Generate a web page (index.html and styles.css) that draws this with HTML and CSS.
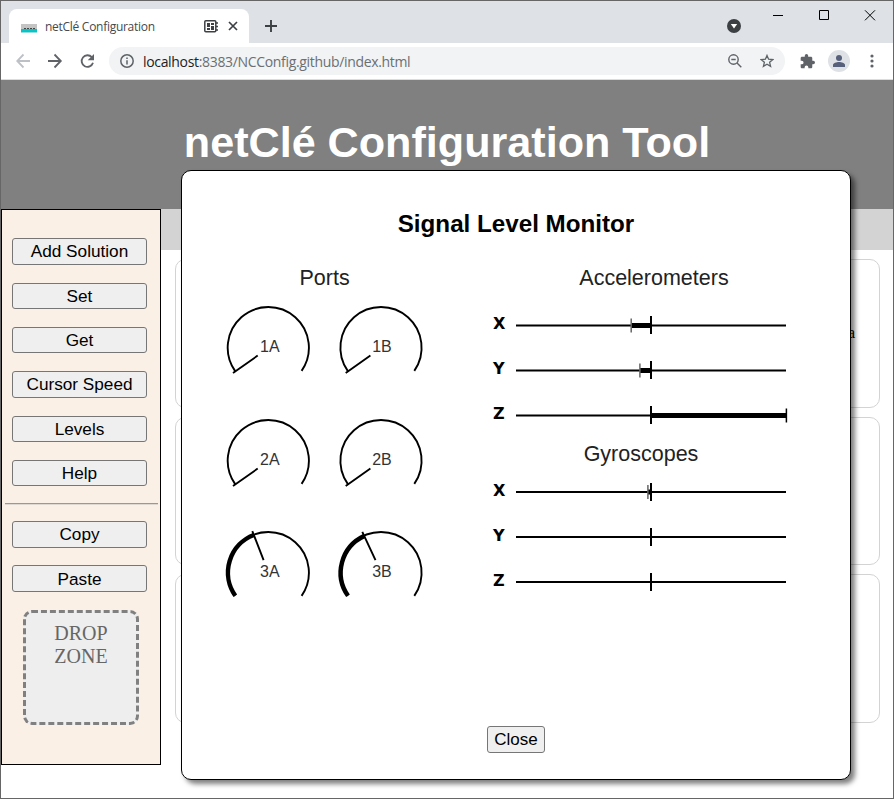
FILE: index.html
```html
<!DOCTYPE html>
<html lang="en">
<head>
<meta charset="utf-8">
<title>netClé Configuration</title>
<link rel="stylesheet" href="styles.css">
</head>
<body>
<div class="window">
  <div class="tabstrip">
    <div class="tab">
      <svg class="favicon" width="16" height="9" viewBox="0 0 16 9"><path fill="#c4c4c4" d="M0 0h16v5H0z"/><path fill="#00c8c8" d="M0 5h16v4H0z"/><path fill="#98dede" d="M0 8h16v1H0z"/><path stroke="#444" stroke-dasharray="2 1" d="M3 4.5h11"/></svg>
      <span class="tab-title">netClé Configuration</span>
      <svg class="chip" width="15" height="13" viewBox="0 0 15 13" fill="none" stroke="#3c4043"><rect x=".8" y=".8" width="11" height="11" rx="1" stroke-width="1.5"/><path stroke-width="1.5" d="M12 3h2M12 6.5h2M12 10h2"/><path fill="#3c4043" stroke="none" d="M3 3h3v4H3zM7 3h3v2H7zM3 8h3v2H3zM7 6h3v4H7z"/></svg>
      <svg class="tab-close" width="10" height="10" viewBox="0 0 10 10" stroke="#3c4043" stroke-width="1.7"><path d="M1 1l8 8M9 1l-8 8"/></svg>
    </div>
    <svg class="new-tab" width="12" height="12" viewBox="0 0 12 12" stroke="#3c4043" stroke-width="1.9"><path d="M6 0v12M0 6h12"/></svg>
    <svg class="tab-search" width="14" height="14" viewBox="0 0 14 14"><circle cx="7" cy="7" r="7" fill="#3c4043"/><path fill="#fff" d="M3.8 5h6.4L7 9.6z"/></svg>
    <svg class="win-controls" width="104" height="12" viewBox="0 0 104 12" fill="none" stroke="#000"><path d="M0 5.500h10M46.500.5h9v9h-9zM92 .3l10 10M102 .3l-10 10"/></svg>
  </div>
  <div class="toolbar">
    <svg class="nav" width="80" height="16" viewBox="0 0 80 16" fill="none" stroke-width="1.8"><g stroke="#bdc1c6"><path d="M14 8H1.500M7.500 1.500L1.200 8l6.300 6.500"/></g><g stroke="#5f6368"><path d="M32 8h12.500M38.500 1.500L44.800 8l-6.300 6.500M75.800 4.200A5.800 5.800 0 1 0 77 9.800"/><path fill="#5f6368" stroke="none" d="M78 1v6.300h-6.300z"/></g></svg>
    <div class="omnibox">
      <svg width="14" height="14" viewBox="0 0 14 14" fill="none" stroke="#5f6368" stroke-width="1.5"><circle cx="7" cy="7" r="6.200"/><path d="M7 6.200v4.300M7 3.400v1.500"/></svg>
      <span class="url"><b>localhost</b>:8383/NCConfig.github/index.html</span>
      <svg class="mag" width="14" height="14" viewBox="0 0 14 14" fill="none" stroke="#5f6368" stroke-width="1.400"><circle cx="5.500" cy="5.500" r="4.700"/><path d="M3.300 5.500h4.400M9 9l4.300 4.300"/></svg>
      <svg class="star" width="14" height="14" viewBox="0 0 14 14" fill="none" stroke="#5f6368" stroke-width="1.300"><path d="M7 1.400l1.600 3.800 4.200.4-3.200 2.700 1 4.100L7 10.200l-3.600 2.200 1-4.100L1.200 5.600l4.200-.4z"/></svg>
    </div>
    <svg class="puzzle" width="15" height="15" viewBox="1 1 22 22"><path fill="#5f6368" d="M20.500 11H19V7c0-1.100-.9-2-2-2h-4V3.500a2.500 2.500 0 0 0-5 0V5H4c-1.100 0-2 .9-2 2v3.800h1.500a2.700 2.700 0 0 1 0 5.400H2V20c0 1.100.9 2 2 2h3.800v-1.500a2.700 2.700 0 0 1 5.400 0V22H17c1.100 0 2-.9 2-2v-4h1.500a2.500 2.500 0 0 0 0-5z"/></svg>
    <svg class="avatar" width="22" height="22" viewBox="0 0 22 22"><circle cx="11" cy="11" r="11" fill="#dee1e6"/><g fill="#56607a"><circle cx="11" cy="8" r="3"/><path d="M5 17v-2c0-2 3.500-3 6-3s6 1 6 3v2z"/></g></svg>
    <svg class="dots" width="4" height="14" viewBox="0 0 4 14" fill="#5f6368"><circle cx="2" cy="2" r="1.600"/><circle cx="2" cy="7" r="1.600"/><circle cx="2" cy="12" r="1.600"/></svg>
  </div>
  <div class="page">
    <header class="banner"><h1>netClé Configuration Tool</h1></header>
    <div class="body">
      <nav class="sidebar">
        <button>Add Solution</button>
        <button>Set</button>
        <button>Get</button>
        <button>Cursor Speed</button>
        <button>Levels</button>
        <button>Help</button>
        <hr>
        <button>Copy</button>
        <button>Paste</button>
        <div class="dropzone">DROP<br>ZONE</div>
      </nav>
      <main class="content">
        <div class="strip"></div>
        <div class="cards">
          <div class="card">a</div>
          <div class="card"></div>
          <div class="card"></div>
        </div>
      </main>
    </div>
  </div>
  <section class="dialog">
    <h2>Signal Level Monitor</h2>
    <div class="monitor">
      <div class="ports">
        <h3>Ports</h3>
        <div class="gauges">
          <svg class="gauge" viewBox="-56.300 -56.600 112.600 112.600"><path d="M-33.300 23.300A40.600 40.600 0 1 1 33.300 23.300M-10.600 8L-35.300 25.400"/><text x="1.500" y="4.500">1A</text></svg>
          <svg class="gauge" viewBox="-56 -56.600 112.600 112.600"><path d="M-33.300 23.300A40.600 40.600 0 1 1 33.300 23.300M-10.600 8L-35.300 25.400"/><text x="1" y="4.500">1B</text></svg>
          <svg class="gauge" viewBox="-56.300 -56.600 112.600 112.600"><path d="M-33.300 23.300A40.600 40.600 0 1 1 33.300 23.300M-10.600 8L-35.300 25.400"/><text x="1.500" y="4.500">2A</text></svg>
          <svg class="gauge" viewBox="-56 -56.600 112.600 112.600"><path d="M-33.300 23.300A40.600 40.600 0 1 1 33.300 23.300M-10.600 8L-35.300 25.400"/><text x="1" y="4.500">2B</text></svg>
          <svg class="gauge" viewBox="-56.300 -56.600 112.600 112.600"><path d="M-33.300 23.300A40.600 40.600 0 1 1 33.300 23.300M-4.700 -12.500L-16 -41.500"/><path class="level" d="M-33 23.200A40.300 40.300 0 0 1 -14.500 -37.600"/><text x="1.500" y="4.500">3A</text></svg>
          <svg class="gauge" viewBox="-56 -56.600 112.600 112.600"><path d="M-33.300 23.300A40.600 40.600 0 1 1 33.300 23.300M-5.500 -12.500L-18.700 -40.800"/><path class="level" d="M-33 23.200A40.300 40.300 0 0 1 -17 -36.500"/><text x="1" y="4.500">3B</text></svg>
        </div>
      </div>
      <div class="sensors">
        <h3>Accelerometers</h3>
        <div class="axis"><b>X</b><svg width="272" height="20"><path class="line" d="M0 10.500h270"/><path class="mid" d="M135 1v18"/><path class="bar" d="M115.500 10.500H135"/><path class="peak" d="M115.200 3.500v14"/></svg></div>
        <div class="axis"><b>Y</b><svg width="272" height="20"><path class="line" d="M0 10.500h270"/><path class="mid" d="M135 1v18"/><path class="bar" d="M124 10.500h11"/><path class="peak" d="M123.900 3.500v14"/></svg></div>
        <div class="axis"><b>Z</b><svg width="272" height="20"><path class="line" d="M0 10.500h270"/><path class="mid" d="M135 1v18"/><path class="bar" d="M135 10.500h135"/><path class="peak full" d="M270.400 3.500v14"/></svg></div>
        <h3 class="gyro">Gyroscopes</h3>
        <div class="axis"><b>X</b><svg width="272" height="20"><path class="line" d="M0 10h270"/><path class="mid" d="M135 1v18"/><path class="bar" d="M132 10h3"/><path class="peak" d="M131.900 3v14"/></svg></div>
        <div class="axis"><b>Y</b><svg width="272" height="20"><path class="line" d="M0 10h270"/><path class="mid" d="M135 1v18"/></svg></div>
        <div class="axis"><b>Z</b><svg width="272" height="20"><path class="line" d="M0 10h270"/><path class="mid" d="M135 1v18"/></svg></div>
      </div>
    </div>
    <button class="close">Close</button>
  </section>
</div>
</body>
</html>
```
FILE: styles.css
```css
* { box-sizing: border-box; }
body { margin: 0; overflow: hidden; background: #fff; }
svg { display: block; flex: none; }
.window { position: relative; width: 894px; height: 799px; border: 1px solid #666; overflow: hidden; font-family: "Liberation Sans", Arial, sans-serif; }

.tabstrip { display: flex; height: 42px; background: #dee1e6; }
.tab { display: flex; align-items: center; width: 240px; height: 34px; margin: 8px 0 0 8px; padding-left: 12px; background: #fff; border-radius: 8px 8px 0 0; }
.favicon { margin-top: 4px; }
.tab-title { width: 159px; margin-left: 8px; font: 12px "Open Sans", sans-serif; letter-spacing: -.28px; color: #45494d; white-space: nowrap; }
.tab-close { margin-left: 9px; }
.new-tab { margin: 19px 0 0 16px; }
.tab-search { margin: 18px 0 0 auto; }
.win-controls { margin: 9px 16px 0 32px; }

.toolbar { display: flex; align-items: center; height: 37px; padding-left: 15px; background: #fff; border-bottom: 1px solid #dadce0; }
.omnibox { display: flex; align-items: center; width: 676px; height: 28px; margin-left: 13px; padding: 0 11px; border-radius: 14px; background: #f1f3f4; }
.url { margin-left: 9px; font: 14px "Open Sans", sans-serif; letter-spacing: -.33px; color: #6b6f73; white-space: nowrap; }
.url b { font-weight: 400; color: #202124; }
.mag { margin-left: auto; }
.star { margin-left: 18px; }
.puzzle { margin-left: 15px; }
.avatar { margin-left: 13px; }
.dots { margin-left: 20px; }

.banner { height: 129px; background: #808080; }
.banner h1 { margin: 0; padding-top: 38px; font-size: 43.150px; line-height: 49px; text-align: center; color: #fff; }
.body { display: flex; }
.sidebar { width: 160px; height: 556px; padding: 28.300px 2px 0 3px; border: 1px solid #000; background: #faf0e6; }
button { display: block; height: 26.400px; padding: 0; border: 1px solid #767676; border-radius: 3px; background: #efefef; font: 17px/24px "Liberation Sans", Arial, sans-serif; color: #000; text-align: center; }
.sidebar button { width: 135px; margin: 0 0 17.930px 7px; font-size: 17.200px; }
.sidebar hr { height: 2px; margin: -1px 0 16px; border: 0; border-top: 1px solid #999; border-bottom: 1px solid #ddd8d2; }
.dropzone { width: 116px; height: 115px; margin-left: 18px; padding-top: 9px; border: 3px dashed #808080; border-radius: 9px; background: #eee; font: 20px/23px "Liberation Serif", serif; color: #666; text-align: center; }
.content { flex: 1; }
.strip { height: 41px; background: #d3d3d3; }
.cards { display: grid; gap: 9px; padding: 9px 13px 0 14px; }
.card { height: 148.600px; padding: 63px 24px 0; border: 1px solid #d3d3d3; border-radius: 10px; font: 16px/20px "Liberation Serif", serif; text-align: right; }

/* dialog floats over the page */
.dialog { position: absolute; left: 180px; top: 169px; width: 670px; height: 610px; border: 1px solid #000; border-radius: 10px; background: #fff; box-shadow: 4px 4px 5px rgba(0,0,0,.5); }
h2 { margin: 39px 0 0; font-size: 24.200px; line-height: 28px; text-align: center; }
h3 { margin: 0; font-size: 21.500px; line-height: 26px; font-weight: 400; text-align: center; color: #222; }
.monitor { display: flex; padding: 27px 0 0 30px; height: 488px; }
.ports { width: 225.200px; }
.gauges { display: grid; grid-template-columns: 112.600px 112.600px; }
.gauge { width: 112.600px; height: 112.600px; fill: none; stroke: #000; stroke-width: 1.900px; }
.gauge text { fill: #333; stroke: none; font-size: 16px; text-anchor: middle; }
.gauge .level { stroke-width: 4.500px; }
.sensors { width: 322px; margin-left: 55.800px; }
.axis { display: flex; height: 45px; align-items: center; }
.axis b { width: 23px; padding-bottom: 1px; font: bold 15px/18px "DejaVu Sans", sans-serif; transform: scaleX(1.07); transform-origin: 0 50%; }
.axis svg { fill: none; stroke: #000; }
.line, .mid { stroke-width: 2px; }
.bar { stroke-width: 5px; }
.peak { stroke: #666; stroke-width: 1.500px; }
.peak.full { stroke: #000; }
h3 + .axis { margin-top: 11px; }
h3.gyro { margin-top: 4px; padding-right: 26px; }
h3.gyro + .axis { margin-top: 2px; }
.close { width: 58px; height: 27px; margin: 0 auto; }
```
